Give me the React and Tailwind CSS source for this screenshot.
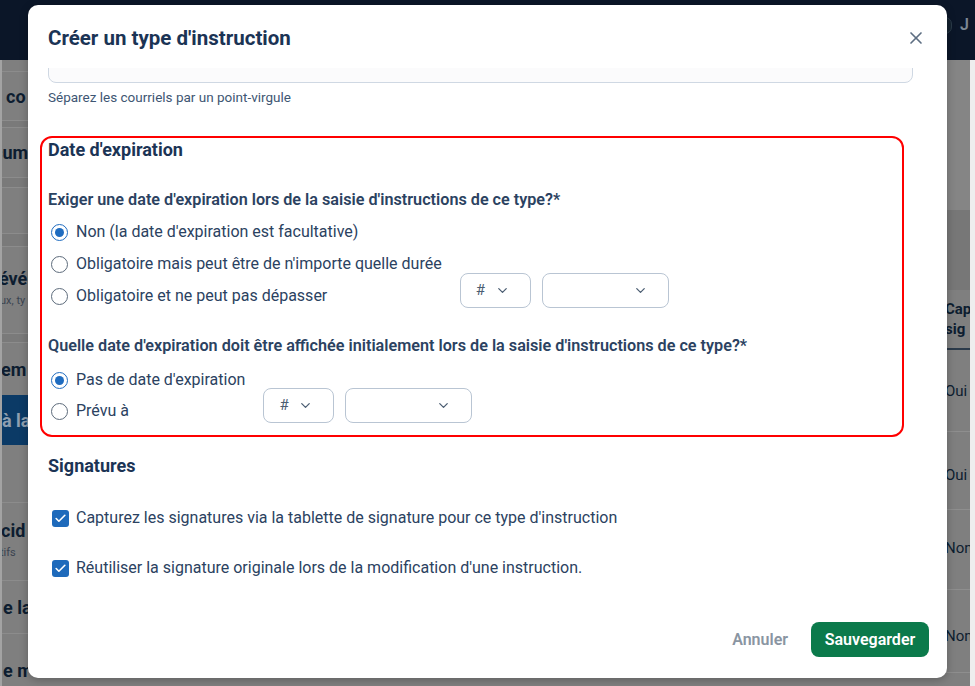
import { ChevronDown, X, Check } from 'lucide-react';

const font = { fontFamily: 'Roboto, "Liberation Sans", sans-serif' };

function Radio({ checked }) {
  return checked ? (
    <span className="flex h-[17px] w-[17px] shrink-0 items-center justify-center rounded-full border-[1.5px] border-[#1f6cc0]">
      <span className="h-[9px] w-[9px] rounded-full bg-[#1f6cc0]" />
    </span>
  ) : (
    <span className="h-[17px] w-[17px] shrink-0 rounded-full border-[1.5px] border-[#5d6b7b]" />
  );
}

function RadioRow({ checked, label }) {
  return (
    <div className="flex h-[20px] items-center gap-[8px] pl-[3px]">
      <Radio checked={checked} />
      <span className="whitespace-nowrap text-[16px] leading-[20px] text-[#2b4261]">{label}</span>
    </div>
  );
}

function Selects() {
  return (
    <div className="-mb-[2px] -mt-[13px] flex gap-[11px] self-start">
      <div className="flex h-[35px] w-[71px] items-center justify-between rounded-[8px] border-[1.5px] border-[#b9c5d3] pl-[15px] pr-[20px] text-[15px] text-[#4b5d72]">
        <span>#</span>
        <ChevronDown size={15} strokeWidth={2} />
      </div>
      <div className="flex h-[35px] w-[127px] items-center justify-end rounded-[8px] border-[1.5px] border-[#b9c5d3] pr-[20px] text-[#4b5d72]">
        <ChevronDown size={15} strokeWidth={2} />
      </div>
    </div>
  );
}

function CheckRow({ label }) {
  return (
    <div className="flex h-[20px] items-center gap-[7px] pl-[4px]">
      <span className="flex h-[17px] w-[17px] items-center justify-center rounded-[3px] bg-[#1e6abb] text-white">
        <Check size={13} strokeWidth={3} />
      </span>
      <span className="text-[16px] leading-[20px] text-[#2b4261]">{label}</span>
    </div>
  );
}

function Background() {
  return (
    <div className="flex h-full w-full flex-col bg-[#7f7f7f]">
      <div className="flex h-[60px] shrink-0 items-start justify-end bg-[#0b1628] pr-[6px] pt-[13px]">
        <div className="flex items-center gap-[8px]">
          <span className="h-[17px] w-[14px] rounded-full border border-[#2a3a48] bg-[#14222f]" />
          <span className="text-[16px] font-semibold text-[#7c8794]">J</span>
        </div>
      </div>
      <div className="flex flex-1">
        <div className="flex w-[28px] flex-col overflow-hidden whitespace-nowrap border-l-2 border-[#a3a3a3] text-[18px] font-bold text-[#0d1d30]">
          <div className="h-[12px] border-b border-[#8c8c8c]" />
          <div className="flex h-[48px] items-center pl-[4px]">co</div>
          <div className="h-[8px] border-y border-[#8c8c8c] bg-[#7a7a7a]" />
          <div className="flex h-[49px] items-center -ml-[9px]">cum</div>
          <div className="h-[11px] border-y border-[#8c8c8c] bg-[#7a7a7a]" />
          <div className="h-[45px]" />
          <div className="h-[14px] border-y border-[#8c8c8c] bg-[#7a7a7a]" />
          <div className="flex h-[86px] flex-col justify-center leading-[22px]">
            <span className="-ml-[3px]">évé</span>
            <span className="-ml-[2px] text-[11px] font-normal text-[#3a4350]">ux, ty</span>
          </div>
          <div className="h-[10px] border-y border-[#8c8c8c] bg-[#7a7a7a]" />
          <div className="flex h-[52px] items-center -ml-[1px]">em</div>
          <div className="flex h-[50px] items-center bg-[#0b3a66] text-[#8f9fb0]">à la</div>
          <div className="h-[58px] shrink-0 border-b border-[#8c8c8c]" />
          <div className="flex h-[77px] shrink-0 flex-col justify-center leading-[22px]">
            <span className="-ml-[1px]">cid</span>
            <span className="-ml-[2px] text-[11px] font-normal text-[#3a4350]">tifs</span>
          </div>
          <div className="flex h-[53px] shrink-0 items-center border-t border-[#8c8c8c] pl-[1px]">e la</div>
          <div className="flex h-[53px] shrink-0 items-center border-t border-[#8c8c8c] pl-[1px] pt-[20px]">e m</div>
        </div>
        <div className="flex-1" />
        <div className="flex w-[25px] flex-col overflow-hidden whitespace-nowrap text-[15px] text-[#0d1d30]">
          <div className="h-[150px] shrink-0 bg-[#858585]" />
          <div className="h-[80px] shrink-0 bg-[#777777]" />
          <div className="flex h-[60px] shrink-0 flex-col justify-center border-b-2 border-[#2b3a4a] font-bold leading-[20px]">
            <span>Cap</span>
            <span>sig</span>
          </div>
          <div className="flex h-[82px] shrink-0 items-center border-b border-[#8e8e8e] pt-[2px]">Oui</div>
          <div className="flex h-[78px] shrink-0 items-center border-b border-[#8e8e8e] pt-[10px]">Oui</div>
          <div className="flex h-[80px] shrink-0 items-center border-b border-[#8e8e8e] pb-[2px]">Non</div>
          <div className="flex h-[83px] shrink-0 items-center border-b border-[#8e8e8e] pt-[10px]">Non</div>
        </div>
        <div className="w-[5px] bg-[#eeeeee]" />
      </div>
    </div>
  );
}

export default function App() {
  return (
    <div className="relative h-[686px] w-[975px] overflow-hidden" style={font}>
      <Background />
      <div className="absolute left-[28px] top-[5px] flex h-[673px] w-[919px] flex-col rounded-[10px] bg-white shadow-[0_2px_8px_rgba(0,0,0,0.25)]">
        <div className="flex h-[63px] shrink-0 items-center justify-between pl-[20px] pr-[21px] pt-[3px]">
          <h1 className="text-[20.5px] font-bold text-[#1b3455]">Créer un type d'instruction</h1>
          <X size={20} strokeWidth={2} className="text-[#5d6e82]" />
        </div>

        <div className="flex-1 overflow-hidden px-[20px]">
          <div className="-mt-[25px] mr-[14px] h-[40px] rounded-[8px] border border-[#cfd8e3] bg-[#fbfbfc]" />
          <p className="mt-[6px] text-[13.5px] leading-[16px] text-[#3e5673]">
            Séparez les courriels par un point-virgule
          </p>

          <section className="-ml-[8px] mr-[23px] mt-[31px] rounded-[12px] border-2 border-[#ff0000] pb-[14px] pl-[6px] pt-[2px]">
            <h2 className="text-[18px] font-bold leading-[20px] text-[#1b3455]">Date d'expiration</h2>

            <p className="mt-[30px] text-[16.2px] font-semibold leading-[20px] text-[#2b4261]">
              Exiger une date d'expiration lors de la saisie d'instructions de ce type?*
            </p>
            <div className="mt-[12px] grid grid-cols-[auto_auto] justify-start gap-x-[18px] gap-y-[12px]">
              <RadioRow checked label="Non (la date d'expiration est facultative)" />
              <div />
              <RadioRow label="Obligatoire mais peut être de n'importe quelle durée" />
              <div />
              <RadioRow label="Obligatoire et ne peut pas dépasser" />
              <Selects />
            </div>

            <p className="mt-[30px] text-[16.2px] font-semibold leading-[20px] text-[#2b4261]">
              Quelle date d'expiration doit être affichée initialement lors de la saisie d'instructions de ce type?*
            </p>
            <div className="mt-[14px] grid grid-cols-[auto_auto] justify-start gap-x-[18px] gap-y-[11px]">
              <RadioRow checked label="Pas de date d'expiration" />
              <div />
              <RadioRow label="Prévu à" />
              <Selects />
            </div>
          </section>

          <h2 className="mt-[19px] text-[18px] font-bold leading-[20px] text-[#1b3455]">Signatures</h2>
          <div className="mt-[32px] flex flex-col gap-[30px]">
            <CheckRow label="Capturez les signatures via la tablette de signature pour ce type d'instruction" />
            <CheckRow label="Réutiliser la signature originale lors de la modification d'une instruction." />
          </div>
        </div>

        <div className="flex shrink-0 items-center justify-end gap-[23px] pb-[21px] pr-[18px]">
          <span className="text-[16px] font-semibold text-[#8a95a2]">Annuler</span>
          <button className="h-[35px] w-[118px] rounded-[8px] bg-[#0b7a4b] text-[16px] font-semibold text-white">
            Sauvegarder
          </button>
        </div>
      </div>
    </div>
  );
}
